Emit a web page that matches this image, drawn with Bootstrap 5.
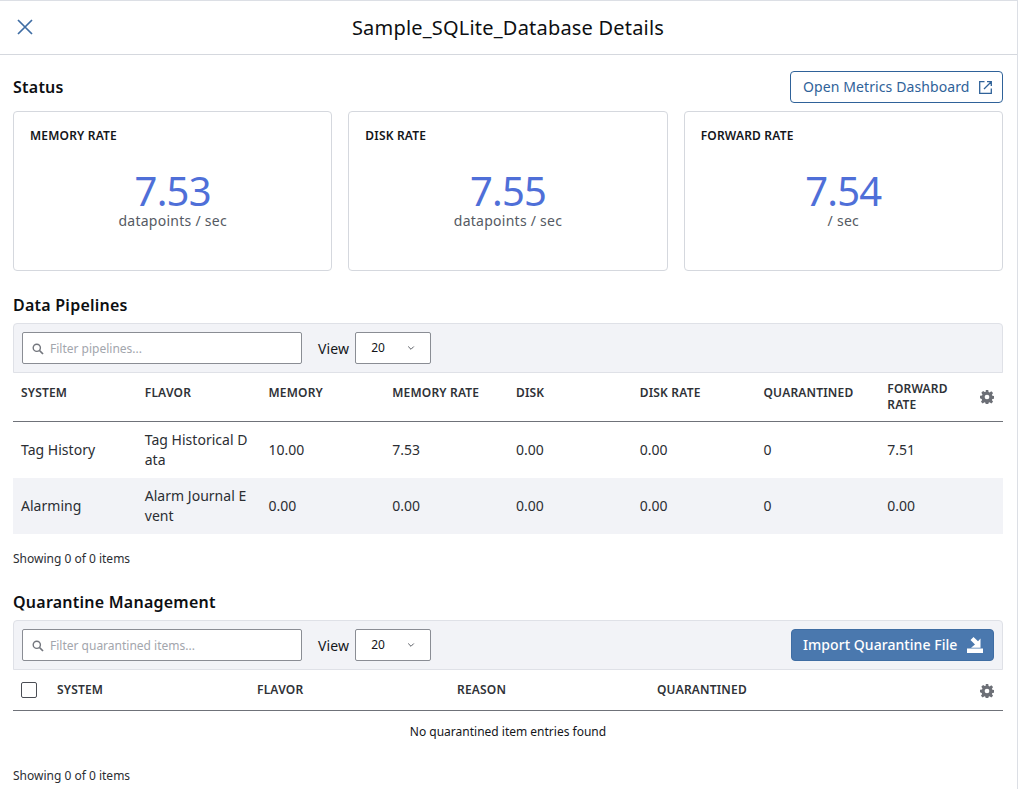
<!DOCTYPE html>
<html lang="en"><head><meta charset="utf-8"><title>Details</title>
<link href="https://cdn.jsdelivr.net/npm/bootstrap@5.3.0/dist/css/bootstrap.min.css" rel="stylesheet">
<style>
html,body{height:789px;overflow:hidden;background:#fff}
body{font-family:"Noto Sans",sans-serif;color:#14161a;font-size:14px}
.panel{width:1018px;height:789px;border-top:1px solid #dcdfe5;border-right:1px solid #dcdfe5}
.hdr{height:54px;border-bottom:1px solid #d5d8de;position:relative}
.hdr h1{font-size:20px;font-weight:400;margin:0;line-height:54px;padding-right:1px;letter-spacing:.2px;color:#0d0f12}
.close-x{position:absolute;left:16px;top:17px;width:18px;height:18px}
.body{padding:16px 14px 0 13px}
.sec-title{font-size:16px;font-weight:600;line-height:22px;margin:0;color:#0d0f12;letter-spacing:.24px}
.status-row{height:32px;margin-bottom:8px}
.btn-open{width:213px;height:32px;padding:0 10px 2px 12px;border:1px solid #2f6299;border-radius:4px;color:#2f6299;font-size:14px;background:#fff;letter-spacing:.1px}
.btn-open svg{margin-top:2px}
.rate-row{display:grid;grid-template-columns:repeat(3,1fr);gap:16px;margin-bottom:23px}
.rate{height:160px;border:1px solid #d5d8de;border-radius:4px;padding:15px 16px}
.rate h6{font-size:12px;font-weight:600;margin:0;line-height:18px;color:#14161a;letter-spacing:.18px}
.rate .val{font-size:40px;line-height:36px;color:#4f6fd8;margin:28px 0 3px;text-align:center;font-weight:400;letter-spacing:-.8px}
.rate .unit{font-size:14px;line-height:18px;color:#555a63;text-align:center;letter-spacing:.26px}
.bar{height:50px;background:#f2f3f7;border:1px solid #dfe1e7;border-radius:4px 4px 0 0;padding:0 8px;margin-top:7px}
.search{width:280px;height:32px;border:1px solid #8a8d94;border-radius:2px;background:#fff;padding:1px 0 0 9px;gap:6px;font-size:12px;color:#a3a6ad}
.view{font-size:14px;margin:0 6px 0 16px;color:#14161a;letter-spacing:.15px}
.sel{width:76px;height:32px;border:1px solid #8a8d94;border-radius:2px;background:#fff;font-size:12px;padding:0 15px 0 15px;color:#14161a}
.btn-imp{width:203px;height:32px;background:#4a78ae;border:1px solid #3f6da3;border-radius:4px;color:#fff;font-size:14px;font-weight:500;padding:0 10px 2px 11px;margin-left:auto;letter-spacing:.06px}
.btn-imp svg{margin-top:2px}
table.data{table-layout:fixed;width:100%;margin:0;position:relative}
table.data th{font-size:12px;font-weight:600;color:#2f3237;padding:0 8px;vertical-align:middle;line-height:16px;border-bottom:1px solid #6f7279;text-align:left;letter-spacing:.18px}
table.data td{font-size:14px;line-height:20px;padding:0 8px;vertical-align:middle;color:#2b2e33;word-break:break-all;border:0;height:56px;letter-spacing:.02px}
.pipes thead tr{height:48px}
.pipes th.one{padding-bottom:8px}
.pipes tbody tr:first-child td{height:57px;padding-top:1px}
.pipes tr.alt td{background:#f2f3f7}
.quar thead tr{height:40px}
.quar .gear{margin-top:-6px}
.quar td.empty{height:41px;padding-top:3px;font-size:12px;text-align:center;word-break:normal;color:#14161a;letter-spacing:0}
.gear-wrap{position:relative}
.gear{position:absolute;right:9px;top:50%;margin-top:-7px;width:14px;height:14px}
.count{font-size:12px;line-height:16px;color:#2b2e33}
.chk{width:16px;height:16px;border:1px solid #4b4e55;border-radius:2px;background:#fff;display:block}
.m1{margin-top:17px;margin-bottom:24px}
.m3{margin-top:17px}
</style></head><body>
<div class="panel">
<div class="hdr text-center">
<svg class="close-x" viewBox="0 0 18 18" aria-hidden="true"><path d="M2 2 16 16M16 2 2 16" stroke="#3f6da3" stroke-width="1.7" fill="none"/></svg>
<h1>Sample_SQLite_Database Details</h1>
</div>
<div class="body">
<div class="d-flex justify-content-between align-items-center status-row">
<h2 class="sec-title">Status</h2>
<button class="btn btn-open d-flex align-items-center justify-content-between" type="button"><span>Open Metrics Dashboard</span>
<svg width="13" height="13" viewBox="0 0 13 13" aria-hidden="true"><path d="M5.500.7H.7v11.600h11.600V7.500M8 .7h4.300V5M12.300.7 5 8" stroke="#2f6299" stroke-width="1.3" fill="none"/></svg></button>
</div>
<div class="rate-row">
<div class="rate"><h6>MEMORY RATE</h6><div class="val">7.53</div><div class="unit">datapoints / sec</div></div>
<div class="rate"><h6>DISK RATE</h6><div class="val">7.55</div><div class="unit">datapoints / sec</div></div>
<div class="rate"><h6>FORWARD RATE</h6><div class="val">7.54</div><div class="unit">/ sec</div></div>
</div>
<h2 class="sec-title">Data Pipelines</h2>
<div class="bar d-flex align-items-center">
<div class="search d-flex align-items-center"><svg width="12" height="12" viewBox="0 0 12 12" aria-hidden="true"><circle cx="4.8" cy="4.8" r="3.600" stroke="#73767d" stroke-width="1.4" fill="none"/><path d="M7.500 7.500 11 11" stroke="#73767d" stroke-width="1.7"/></svg>Filter pipelines...</div>
<span class="view">View</span>
<div class="sel d-flex align-items-center justify-content-between">20<svg width="8" height="6" viewBox="0 0 8 6" aria-hidden="true"><path d="M1.200 1.500 4 4.300 6.800 1.500" stroke="#5a5d64" stroke-width="1" fill="none"/></svg></div>
</div>
<table class="table data pipes">
<thead><tr><th class="one">SYSTEM</th><th class="one">FLAVOR</th><th class="one">MEMORY</th><th class="one">MEMORY RATE</th><th class="one">DISK</th><th class="one">DISK RATE</th><th class="one">QUARANTINED</th><th class="gear-wrap">FORWARD<br>RATE<svg class="gear" viewBox="0 0 16 16" aria-hidden="true"><path fill="#6c6f76" fill-rule="evenodd" d="M6.600 0h2.800l.4 2.300 1.200.5 1.900-1.300 2 2-1.300 1.900.5 1.200 2.300.4v2.800l-2.300.4-.5 1.200 1.300 1.900-2 2-1.900-1.300-1.200.5-.4 2.300H6.600l-.4-2.300-1.200-.5-1.900 1.300-2-2 1.300-1.900-.5-1.200L0 9.400V6.600l2.300-.4.5-1.200-1.300-1.900 2-2 1.900 1.300 1.200-.5zM8 5.300a2.700 2.700 0 1 0 0 5.400 2.700 2.700 0 0 0 0-5.400z"/></svg></th></tr></thead>
<tbody>
<tr><td>Tag History</td><td>Tag Historical Data</td><td>10.00</td><td>7.53</td><td>0.00</td><td>0.00</td><td>0</td><td>7.51</td></tr>
<tr class="alt"><td>Alarming</td><td>Alarm Journal Event</td><td>0.00</td><td>0.00</td><td>0.00</td><td>0.00</td><td>0</td><td>0.00</td></tr>
</tbody></table>
<div class="count m1">Showing 0 of 0 items</div>
<h2 class="sec-title">Quarantine Management</h2>
<div class="bar d-flex align-items-center">
<div class="search d-flex align-items-center"><svg width="12" height="12" viewBox="0 0 12 12" aria-hidden="true"><circle cx="4.8" cy="4.8" r="3.600" stroke="#73767d" stroke-width="1.4" fill="none"/><path d="M7.500 7.500 11 11" stroke="#73767d" stroke-width="1.7"/></svg>Filter quarantined items...</div>
<span class="view">View</span>
<div class="sel d-flex align-items-center justify-content-between">20<svg width="8" height="6" viewBox="0 0 8 6" aria-hidden="true"><path d="M1.200 1.500 4 4.300 6.800 1.500" stroke="#5a5d64" stroke-width="1" fill="none"/></svg></div>
<button class="btn btn-imp d-flex align-items-center justify-content-between" type="button"><span>Import Quarantine File</span>
<svg width="16" height="16" viewBox="0 0 16 16" aria-hidden="true"><path fill="#fff" d="M0 11.500h16V16H0zM4 10.700H13.500V1.500L11 4.200 6.500 0 3.500 3 8 7.500z"/></svg></button>
</div>
<table class="table data quar">
<colgroup><col style="width:36px"><col style="width:200px"><col style="width:200px"><col style="width:200px"><col></colgroup>
<thead><tr><th><span class="chk"></span></th><th>SYSTEM</th><th>FLAVOR</th><th>REASON</th><th class="gear-wrap">QUARANTINED<svg class="gear" viewBox="0 0 16 16" aria-hidden="true"><path fill="#6c6f76" fill-rule="evenodd" d="M6.600 0h2.800l.4 2.300 1.200.5 1.900-1.300 2 2-1.300 1.900.5 1.200 2.300.4v2.800l-2.300.4-.5 1.200 1.300 1.900-2 2-1.900-1.300-1.200.5-.4 2.300H6.600l-.4-2.300-1.200-.5-1.900 1.300-2-2 1.300-1.900-.5-1.200L0 9.400V6.600l2.300-.4.5-1.200-1.300-1.900 2-2 1.900 1.300 1.200-.5zM8 5.300a2.700 2.700 0 1 0 0 5.400 2.700 2.700 0 0 0 0-5.400z"/></svg></th></tr></thead>
<tbody><tr><td class="empty" colspan="5">No quarantined item entries found</td></tr></tbody></table>
<div class="count m3">Showing 0 of 0 items</div>
</div>
</div>
<script src="https://cdn.jsdelivr.net/npm/bootstrap@5.3.0/dist/js/bootstrap.bundle.min.js"></script>
</body></html>
